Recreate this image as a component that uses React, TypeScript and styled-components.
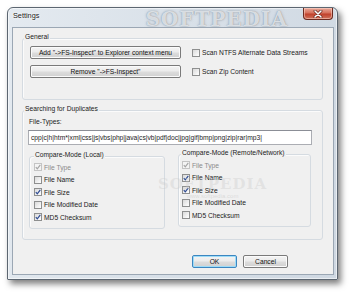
import React, {FC} from "react";
import styled, {createGlobalStyle} from "styled-components";

const GlobalStyle = createGlobalStyle`
  html, body {
    margin: 0;
    padding: 0;
    background: #ffffff;
  }
  body {
    font-family: "Liberation Sans", Arial, sans-serif;
    font-size: 6.7px;
    color: #1b1b1b;
  }
`;

const Page = styled.div`
  width: 350px;
  height: 293px;
  box-sizing: border-box;
  padding: 7px 0 0 7px;
  overflow: hidden;
`;

const Window = styled.div`
  width: 331px;
  height: 273px;
  box-sizing: border-box;
  display: flex;
  flex-direction: column;
  padding: 0 3px 4px 4px;
  border: 1px solid #5c6671;
  border-radius: 6px 6px 1px 1px;
  background: linear-gradient(100deg, #e4eaf0 0%, #d9e1e9 45%, #cfd8e2 100%);
  box-shadow: 3px 4px 6px rgba(0, 0, 0, 0.5), inset 0 0 0 1px rgba(255, 255, 255, 0.55);
`;

const TitleBar = styled.div`
  height: 19px;
  display: flex;
  align-items: flex-start;
  overflow: hidden;
`;

const Title = styled.span`
  margin: 3px 0 0 1px;
  line-height: 10px;
  font-size: 7.3px;
  color: #1a1a1a;
  text-shadow: 0 0 3px #ffffff, 0 0 2px #ffffff;
`;

const TitleWatermark = styled.span`
  margin: -1px 0 0 106px;
  font-family: "DejaVu Serif", serif;
  font-weight: bold;
  font-size: 20px;
  line-height: 24px;
  letter-spacing: 1px;
  color: rgba(245, 248, 251, 0.75);
  text-shadow: 0 0 1px rgba(70, 80, 92, 0.55), 0 0 3px rgba(120, 130, 142, 0.4);
`;

const Spacer = styled.div`
  flex: 1;
`;

const CloseButton = styled.div`
  width: 30px;
  height: 12px;
  margin-right: 1px;
  box-sizing: border-box;
  display: flex;
  align-items: center;
  justify-content: center;
  border: 1px solid #6b2a20;
  border-top: none;
  border-radius: 0 0 4px 4px;
  background: linear-gradient(180deg, #e9a99a 0%, #d6705c 45%, #c0412c 55%, #d0735d 100%);
  box-shadow: inset 0 0 0 1px rgba(255, 220, 210, 0.5);
`;

const Client = styled.div`
  flex: 1;
  position: relative;
  display: flex;
  flex-direction: column;
  padding: 10px 10px 0 9px;
  border: 1px solid #9ba7b4;
  background: #f0f0f0;
`;

const Group = styled.div<{ $h: number; $top?: number }>`
  box-sizing: border-box;
  height: ${p => p.$h}px;
  margin-top: ${p => p.$top ?? 0}px;
  border: 1px solid #d5dbe1;
  border-radius: 3px;
  box-shadow: inset 1px 1px 0 #fbfbfb;
  display: flex;
  flex-direction: column;
`;

const Legend = styled.div<{ $left?: number; $after?: number }>`
  align-self: flex-start;
  height: 9px;
  line-height: 9px;
  margin: -7px 0 ${p => p.$after ?? 0}px ${p => p.$left ?? 1}px;
  padding: 0 1px;
  background: #f0f0f0;
  white-space: nowrap;
`;

const GeneralGrid = styled.div`
  display: grid;
  grid-template-columns: 151px auto;
  grid-auto-rows: 13px;
  column-gap: 11px;
  row-gap: 6px;
  padding: 0 7px;
  align-items: center;
`;

const Button = styled.div<{ $default?: boolean; $w?: number }>`
  box-sizing: border-box;
  height: 13px;
  width: ${p => (p.$w ? `${p.$w}px` : "auto")};
  display: flex;
  align-items: center;
  justify-content: center;
  border: 1px solid ${p => (p.$default ? "#3c86c0" : "#7a7a7a")};
  border-radius: 2px;
  background: linear-gradient(180deg, #f4f4f4 0%, #ebebeb 48%, #dddddd 52%, #d0d0d0 100%);
  box-shadow: inset 0 0 0 1px ${p => (p.$default ? "#9ddcf8" : "#fbfbfb")};
  color: #111111;
  white-space: nowrap;
`;

const CheckRow = styled.div<{ $h?: number }>`
  display: flex;
  align-items: center;
  gap: 2px;
  height: ${p => (p.$h ? `${p.$h}px` : "auto")};
  white-space: nowrap;
`;

const Box = styled.span<{ $disabled?: boolean }>`
  box-sizing: border-box;
  width: 8px;
  height: 8px;
  flex: none;
  display: flex;
  align-items: center;
  justify-content: center;
  border: 1px solid ${p => (p.$disabled ? "#c4c4c4" : "#8e8f8f")};
  background: ${p => (p.$disabled ? "#f4f4f4" : "linear-gradient(135deg, #d9d9d9 0%, #f4f4f4 70%, #ffffff 100%)")};
`;

const CheckText = styled.span<{ $disabled?: boolean }>`
  line-height: 9px;
  color: ${p => (p.$disabled ? "#8b8b8b" : "#1b1b1b")};
`;

const Body = styled.div`
  display: flex;
  flex-direction: column;
  padding: 0 10px 0 5px;
`;

const FieldLabel = styled.div`
  height: 9px;
  line-height: 9px;
  margin-left: 1px;
`;

const TextInput = styled.div`
  box-sizing: border-box;
  height: 15px;
  margin-top: 4px;
  display: flex;
  align-items: center;
  padding-left: 2px;
  border: 1px solid #abadb3;
  border-top-color: #8b8e96;
  background: #ffffff;
  white-space: nowrap;
  overflow: hidden;
`;

const CompareRow = styled.div`
  display: flex;
  align-items: flex-start;
  gap: 13px;
  margin: 11px 0 0 1px;
`;

const CompareBox = styled.div<{ $w: number; $lift?: number }>`
  box-sizing: border-box;
  width: ${p => p.$w}px;
  height: 73px;
  margin-top: ${p => -(p.$lift ?? 0)}px;
  border: 1px solid #d5dbe1;
  border-radius: 3px;
  box-shadow: inset 1px 1px 0 #fbfbfb;
  display: flex;
  flex-direction: column;
`;

const CheckList = styled.div<{ $pad: number }>`
  display: flex;
  flex-direction: column;
  padding-left: ${p => p.$pad}px;
`;

const Footer = styled.div`
  display: flex;
  justify-content: flex-end;
  gap: 6px;
  margin-top: 15px;
  padding-right: 35px;
`;

const Watermark = styled.div`
  position: absolute;
  left: 145px;
  top: 147px;
  display: flex;
  flex-direction: column;
  align-items: center;
  pointer-events: none;
`;

const WatermarkBig = styled.span`
  font-family: "DejaVu Serif", serif;
  font-weight: bold;
  font-size: 15px;
  letter-spacing: 1px;
  color: rgba(200, 200, 200, 0.35);
`;

const WatermarkSmall = styled.span`
  font-size: 6px;
  color: rgba(190, 190, 190, 0.45);
`;

const CheckMark: FC<{ disabled?: boolean }> = ({disabled}) => (
    <svg width="6" height="6" viewBox="0 0 6 6">
        <path d="M0.8 3.2 L2.3 4.9 L5.3 0.8" fill="none" stroke={disabled ? "#a6a6a6" : "#2f4c93"} strokeWidth="1.2"/>
    </svg>
);

interface CheckItem {
    label: string;
    checked: boolean;
    disabled?: boolean;
}

const Checkbox: FC<CheckItem & { h?: number }> = ({label, checked, disabled, h}) => (
    <CheckRow $h={h}>
        <Box $disabled={disabled}>{checked && <CheckMark disabled={disabled}/>}</Box>
        <CheckText $disabled={disabled}>{label}</CheckText>
    </CheckRow>
);

const localModes: CheckItem[] = [
    {label: "File Type", checked: true, disabled: true},
    {label: "File Name", checked: false},
    {label: "File Size", checked: true},
    {label: "File Modified Date", checked: false},
    {label: "MD5 Checksum", checked: true},
];

const remoteModes: CheckItem[] = [
    {label: "File Type", checked: true, disabled: true},
    {label: "File Name", checked: true},
    {label: "File Size", checked: true},
    {label: "File Modified Date", checked: false},
    {label: "MD5 Checksum", checked: false},
];

const App: FC = () => {
    return (
        <Page>
            <GlobalStyle/>
            <Window>
                <TitleBar>
                    <Title>Settings</Title>
                    <TitleWatermark>SOFTPEDIA</TitleWatermark>
                    <Spacer/>
                    <CloseButton>
                        <svg width="10" height="8" viewBox="0 0 10 8">
                            <path d="M2 1 L8 7 M8 1 L2 7" stroke="#5a1a12" strokeWidth="2.8" strokeLinecap="round"/>
                            <path d="M2 1 L8 7 M8 1 L2 7" stroke="#ffffff" strokeWidth="1.6" strokeLinecap="round"/>
                        </svg>
                    </CloseButton>
                </TitleBar>
                <Client>
                    <Group $h={62}>
                        <Legend $after={5}>General</Legend>
                        <GeneralGrid>
                            <Button>Add "-&gt;FS-Inspect" to Explorer context menu</Button>
                            <Checkbox label="Scan NTFS Alternate Data Streams" checked={false}/>
                            <Button>Remove "-&gt;FS-Inspect"</Button>
                            <Checkbox label="Scan Zip Content" checked={false}/>
                        </GeneralGrid>
                    </Group>
                    <Group $h={130} $top={10}>
                        <Legend $after={4}>Searching for Duplicates</Legend>
                        <Body>
                            <FieldLabel>File-Types:</FieldLabel>
                            <TextInput>cpp|c|h|htm*|xml|css|js|vbs|php|java|cs|vb|pdf|doc|jpg|gif|bmp|png|zip|rar|mp3|</TextInput>
                            <CompareRow>
                                <CompareBox $w={136}>
                                    <Legend $left={4} $after={2}>Compare-Mode (Local)</Legend>
                                    <CheckList $pad={4}>
                                        {localModes.map(item => (
                                            <Checkbox key={item.label} {...item} h={12.5}/>
                                        ))}
                                    </CheckList>
                                </CompareBox>
                                <CompareBox $w={133} $lift={2}>
                                    <Legend $left={2} $after={2}>Compare-Mode (Remote/Network)</Legend>
                                    <CheckList $pad={3}>
                                        {remoteModes.map(item => (
                                            <Checkbox key={item.label} {...item} h={12.5}/>
                                        ))}
                                    </CheckList>
                                </CompareBox>
                            </CompareRow>
                        </Body>
                    </Group>
                    <Footer>
                        <Button $default $w={45}>OK</Button>
                        <Button $w={45}>Cancel</Button>
                    </Footer>
                    <Watermark>
                        <WatermarkBig>SOFTPEDIA</WatermarkBig>
                        <WatermarkSmall>www.softpedia.com</WatermarkSmall>
                    </Watermark>
                </Client>
            </Window>
        </Page>
    );
};

export default App;
